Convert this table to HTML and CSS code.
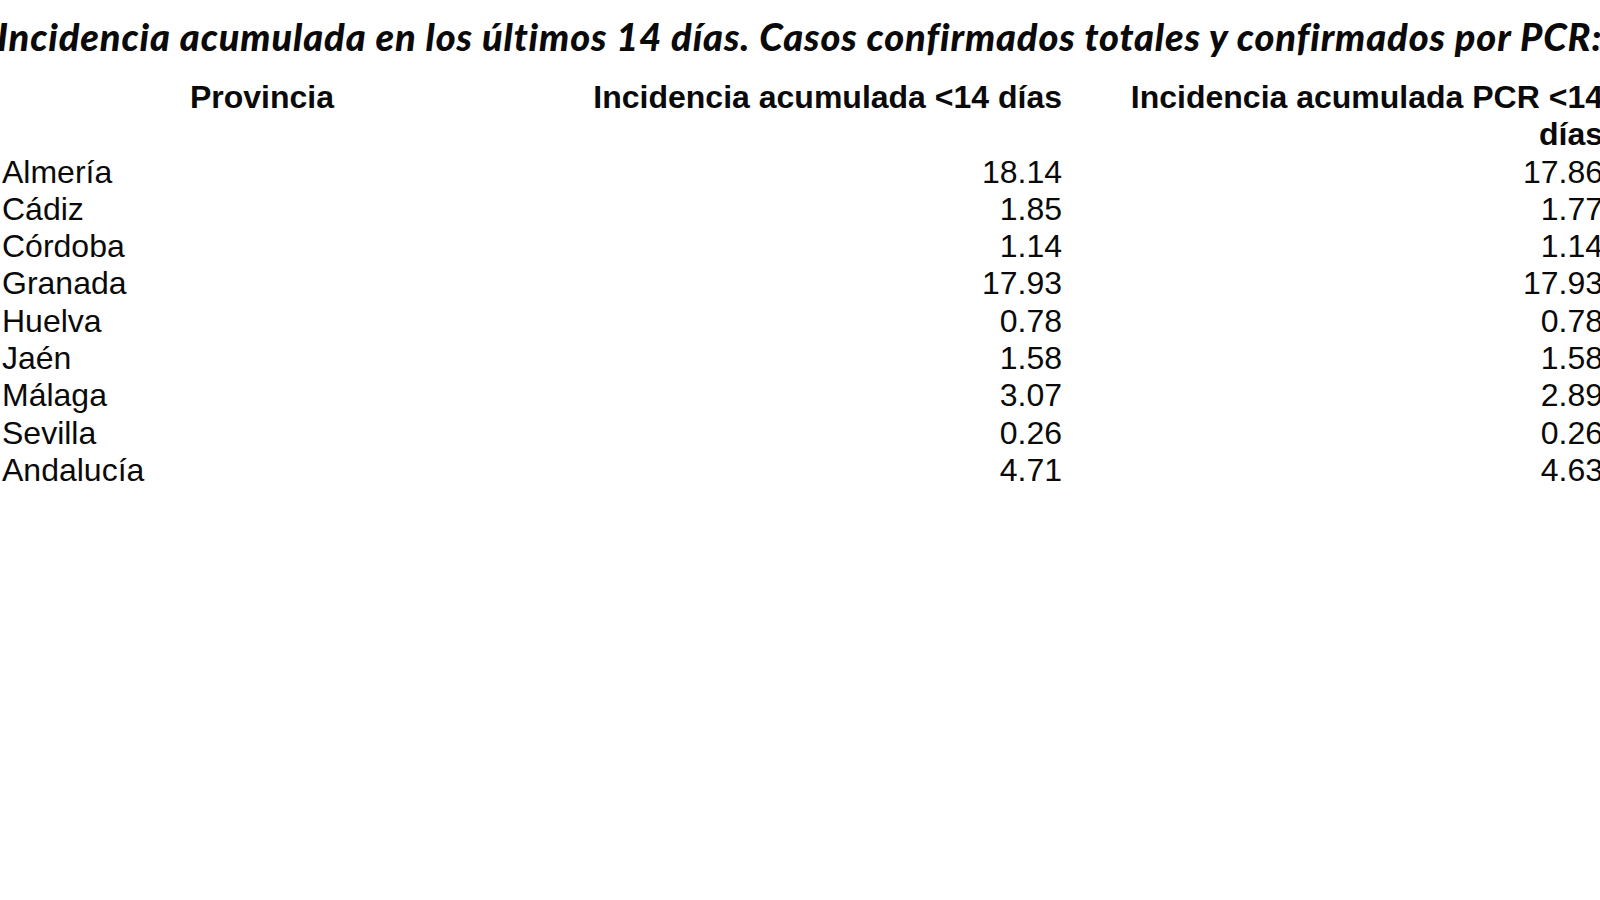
FILE: index.html
```html
<!DOCTYPE html>
<html lang="es">
<head>
<meta charset="utf-8">
<title>Incidencia acumulada</title>
<link rel="stylesheet" href="styles.css">
</head>
<body>
<div class="page">
  <h1 class="title">Incidencia acumulada en los últimos 14 días. Casos confirmados totales y confirmados por PCR:</h1>
  <table class="data">
    <colgroup>
      <col class="c1">
      <col class="c2">
      <col class="c3">
    </colgroup>
    <thead>
      <tr>
        <th class="prov">Provincia</th>
        <th class="num">Incidencia acumulada &lt;14 días</th>
        <th class="num">Incidencia acumulada PCR &lt;14 días</th>
      </tr>
    </thead>
    <tbody>
      <tr><td>Almería</td><td class="num">18.14</td><td class="num">17.86</td></tr>
      <tr><td>Cádiz</td><td class="num">1.85</td><td class="num">1.77</td></tr>
      <tr><td>Córdoba</td><td class="num">1.14</td><td class="num">1.14</td></tr>
      <tr><td>Granada</td><td class="num">17.93</td><td class="num">17.93</td></tr>
      <tr><td>Huelva</td><td class="num">0.78</td><td class="num">0.78</td></tr>
      <tr><td>Jaén</td><td class="num">1.58</td><td class="num">1.58</td></tr>
      <tr><td>Málaga</td><td class="num">3.07</td><td class="num">2.89</td></tr>
      <tr><td>Sevilla</td><td class="num">0.26</td><td class="num">0.26</td></tr>
      <tr><td>Andalucía</td><td class="num">4.71</td><td class="num">4.63</td></tr>
    </tbody>
  </table>
</div>
</body>
</html>
```
FILE: styles.css
```css
html, body {
  margin: 0;
  padding: 0;
  background: #ffffff;
}

.page {
  width: 1600px;
  height: 900px;
  overflow: hidden;
  color: #0a0a0a;
}

.title {
  margin: 0 0 0 -3px;
  padding-top: 14px;
  font-family: "Lato", "Noto Sans", sans-serif;
  font-weight: 900;
  font-style: italic;
  font-size: 38px;
  letter-spacing: 0.88px;
  line-height: 44px;
  white-space: nowrap;
}

.data {
  margin-top: 21px;
  border-collapse: collapse;
  table-layout: fixed;
  width: 1603px;
  font-family: "Liberation Sans", Arial, sans-serif;
  font-size: 32px;
  line-height: 37.3px;
}

.c1 { width: 524px; }
.c2 { width: 538px; }
.c3 { width: 541px; }

.data th,
.data td {
  padding: 0;
  vertical-align: top;
}

.data th {
  font-weight: 700;
}

.data th.prov {
  text-align: center;
}

.data td {
  font-weight: 400;
  text-align: left;
  padding-left: 2px;
}

.data .num {
  text-align: right;
  padding-left: 0;
}
```
